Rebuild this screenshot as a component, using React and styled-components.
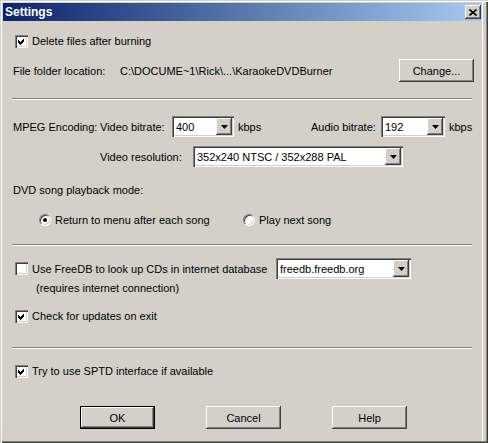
import React from 'react';
import styled, { createGlobalStyle } from 'styled-components';

const GlobalStyle = createGlobalStyle`
  body {
    margin: 0;
    background: #d4d0c8;
    font-family: "Liberation Sans", Arial, sans-serif;
    font-size: 11px;
    color: #000;
  }
`;

const raised = `
  box-shadow: inset -1px -1px #404040, inset 1px 1px #ffffff,
    inset -2px -2px #808080, inset 2px 2px #d4d0c8;
`;

const sunken = `
  box-shadow: inset 1px 1px #808080, inset 2px 2px #404040,
    inset -1px -1px #ffffff, inset -2px -2px #d4d0c8;
`;

function CheckMark() {
  return (
    <svg width="7" height="7" viewBox="0 0 7 7" shapeRendering="crispEdges">
      <polygon points="0,2 2,4 6,0 6,3 2,7 0,5" fill="#000" />
    </svg>
  );
}

function DownArrow() {
  return (
    <svg width="7" height="4" viewBox="0 0 7 4">
      <polygon points="0,0 7,0 3.5,4" fill="#000" />
    </svg>
  );
}

function CloseGlyph() {
  return (
    <svg width="8" height="7" viewBox="0 0 8 7">
      <path d="M0.5 0.5 L7.5 6.5 M7.5 0.5 L0.5 6.5" stroke="#000" strokeWidth="1.6" />
    </svg>
  );
}

function Checkbox({ checked, children }) {
  return (
    <CheckLabel>
      <CheckBoxBox>{checked && <CheckMark />}</CheckBoxBox>
      <span>{children}</span>
    </CheckLabel>
  );
}

function Radio({ checked, children, width }) {
  return (
    <RadioLabel $w={width}>
      <RadioCircle>{checked && <RadioDot />}</RadioCircle>
      <span>{children}</span>
    </RadioLabel>
  );
}

function Combo({ width, value }) {
  return (
    <ComboBox $w={width}>
      <ComboText>{value}</ComboText>
      <DropButton>
        <DownArrow />
      </DropButton>
    </ComboBox>
  );
}

export default function App() {
  return (
    <>
      <GlobalStyle />
      <Window>
        <TitleBar>
          <span>Settings</span>
          <CloseButton>
            <CloseGlyph />
          </CloseButton>
        </TitleBar>
        <Body>
          <Row $top={12} $h={16} $indent={3}>
            <Checkbox checked>Delete files after burning</Checkbox>
          </Row>
          <Row $top={10} $h={23} $indent={1}>
            <Cell $w={107}>File folder location:</Cell>
            <Cell $w={279}>C:\DOCUME~1\Rick\...\KaraokeDVDBurner</Cell>
            <Button>Change...</Button>
          </Row>
          <Separator $top={16} />

          <Row $top={16} $h={21} $indent={1}>
            <Cell $w={87}>MPEG Encoding:</Cell>
            <Cell $w={72}>Video bitrate:</Cell>
            <Combo width={62} value="400" />
            <Cell $w={77} $pad={4}>kbps</Cell>
            <Cell $w={70}>Audio bitrate:</Cell>
            <Combo width={64} value="192" />
            <Cell $pad={4}>kbps</Cell>
          </Row>
          <Row $top={9} $h={21} $indent={88}>
            <Cell $w={93}>Video resolution:</Cell>
            <Combo width={210} value="352x240 NTSC / 352x288 PAL" />
          </Row>
          <Row $top={16} $h={14} $indent={1}>
            <Cell>DVD song playback mode:</Cell>
          </Row>
          <Row $top={15} $h={16} $indent={27}>
            <Radio checked width={204}>Return to menu after each song</Radio>
            <Radio>Play next song</Radio>
          </Row>
          <Separator $top={16} />

          <Row $top={12} $h={21} $indent={3}>
            <CheckCell $w={261}>
              <Checkbox>Use FreeDB to look up CDs in internet database</Checkbox>
            </CheckCell>
            <Combo width={135} value="freedb.freedb.org" />
          </Row>
          <Row $top={2} $h={14} $indent={24}>
            <Cell>(requires internet connection)</Cell>
          </Row>
          <Row $top={13} $h={16} $indent={3}>
            <Checkbox checked>Check for updates on exit</Checkbox>
          </Row>
          <Separator $top={23} />

          <Row $top={14} $h={16} $indent={3}>
            <Checkbox checked>Try to use SPTD interface if available</Checkbox>
          </Row>
          <ButtonRow>
            <Button $default>OK</Button>
            <Button>Cancel</Button>
            <Button>Help</Button>
          </ButtonRow>
        </Body>
      </Window>
    </>
  );
}

const Window = styled.div`
  width: 488px;
  height: 443px;
  box-sizing: border-box;
  padding: 3px 6px 3px 3px;
  background: #d4d0c8;
  display: flex;
  flex-direction: column;
  box-shadow: inset 1px 1px #d4d0c8, inset 2px 2px #ffffff,
    inset -1px -1px #404040, inset -2px -2px #808080,
    inset -5px 0 #d4d0c8, inset -6px 0 #ffffff;
`;

const TitleBar = styled.div`
  height: 18px;
  flex-shrink: 0;
  display: flex;
  align-items: center;
  justify-content: space-between;
  padding: 0 1px 0 2px;
  background: linear-gradient(to right, #0a246a, #a6caf0);
  color: #fff;
  font-weight: bold;
  font-size: 12px;
`;

const CloseButton = styled.span`
  width: 16px;
  height: 14px;
  box-sizing: border-box;
  background: #d4d0c8;
  display: flex;
  align-items: center;
  justify-content: center;
  ${raised}
`;

const Body = styled.div`
  display: flex;
  flex-direction: column;
  padding-left: 9px;
`;

const Row = styled.div`
  display: flex;
  align-items: center;
  margin-top: ${p => p.$top}px;
  height: ${p => p.$h}px;
  padding-left: ${p => p.$indent || 0}px;
  white-space: nowrap;
`;

const Cell = styled.span`
  flex-shrink: 0;
  width: ${p => (p.$w ? `${p.$w}px` : 'auto')};
  padding-left: ${p => p.$pad || 0}px;
  box-sizing: border-box;
`;

const CheckCell = styled.div`
  width: ${p => p.$w}px;
  flex-shrink: 0;
`;

const CheckLabel = styled.label`
  display: flex;
  align-items: center;
  gap: 4px;
`;

const CheckBoxBox = styled.span`
  width: 13px;
  height: 13px;
  box-sizing: border-box;
  background: #fff;
  display: flex;
  align-items: center;
  justify-content: center;
  ${sunken}
`;

const RadioLabel = styled.label`
  display: flex;
  align-items: center;
  gap: 4px;
  width: ${p => (p.$w ? `${p.$w}px` : 'auto')};
  flex-shrink: 0;
`;

const RadioCircle = styled.span`
  width: 12px;
  height: 12px;
  box-sizing: border-box;
  border-radius: 50%;
  background: #fff;
  border: 1px solid;
  border-color: #808080 #ffffff #ffffff #808080;
  box-shadow: inset 1px 1px #404040, inset -1px -1px #d4d0c8;
  display: flex;
  align-items: center;
  justify-content: center;
`;

const RadioDot = styled.span`
  width: 4px;
  height: 4px;
  border-radius: 50%;
  background: #000;
`;

const ComboBox = styled.div`
  width: ${p => p.$w}px;
  height: 21px;
  flex-shrink: 0;
  box-sizing: border-box;
  padding: 2px;
  background: #fff;
  display: flex;
  align-items: center;
  ${sunken}
`;

const ComboText = styled.span`
  flex: 1;
  padding-left: 2px;
  overflow: hidden;
`;

const DropButton = styled.span`
  width: 16px;
  height: 17px;
  box-sizing: border-box;
  background: #d4d0c8;
  display: flex;
  align-items: center;
  justify-content: center;
  ${raised}
`;

const Separator = styled.div`
  width: 460px;
  height: 0;
  margin-top: ${p => p.$top}px;
  border-top: 1px solid #808080;
  border-bottom: 1px solid #ffffff;
`;

const ButtonRow = styled.div`
  display: flex;
  gap: 51px;
  margin-top: 27px;
  padding-left: 68px;
`;

const Button = styled.button`
  width: 75px;
  height: 23px;
  padding: 0;
  flex-shrink: 0;
  font: inherit;
  color: #000;
  background: #d4d0c8;
  border: ${p => (p.$default ? '1px solid #000' : 'none')};
  ${raised}
`;
